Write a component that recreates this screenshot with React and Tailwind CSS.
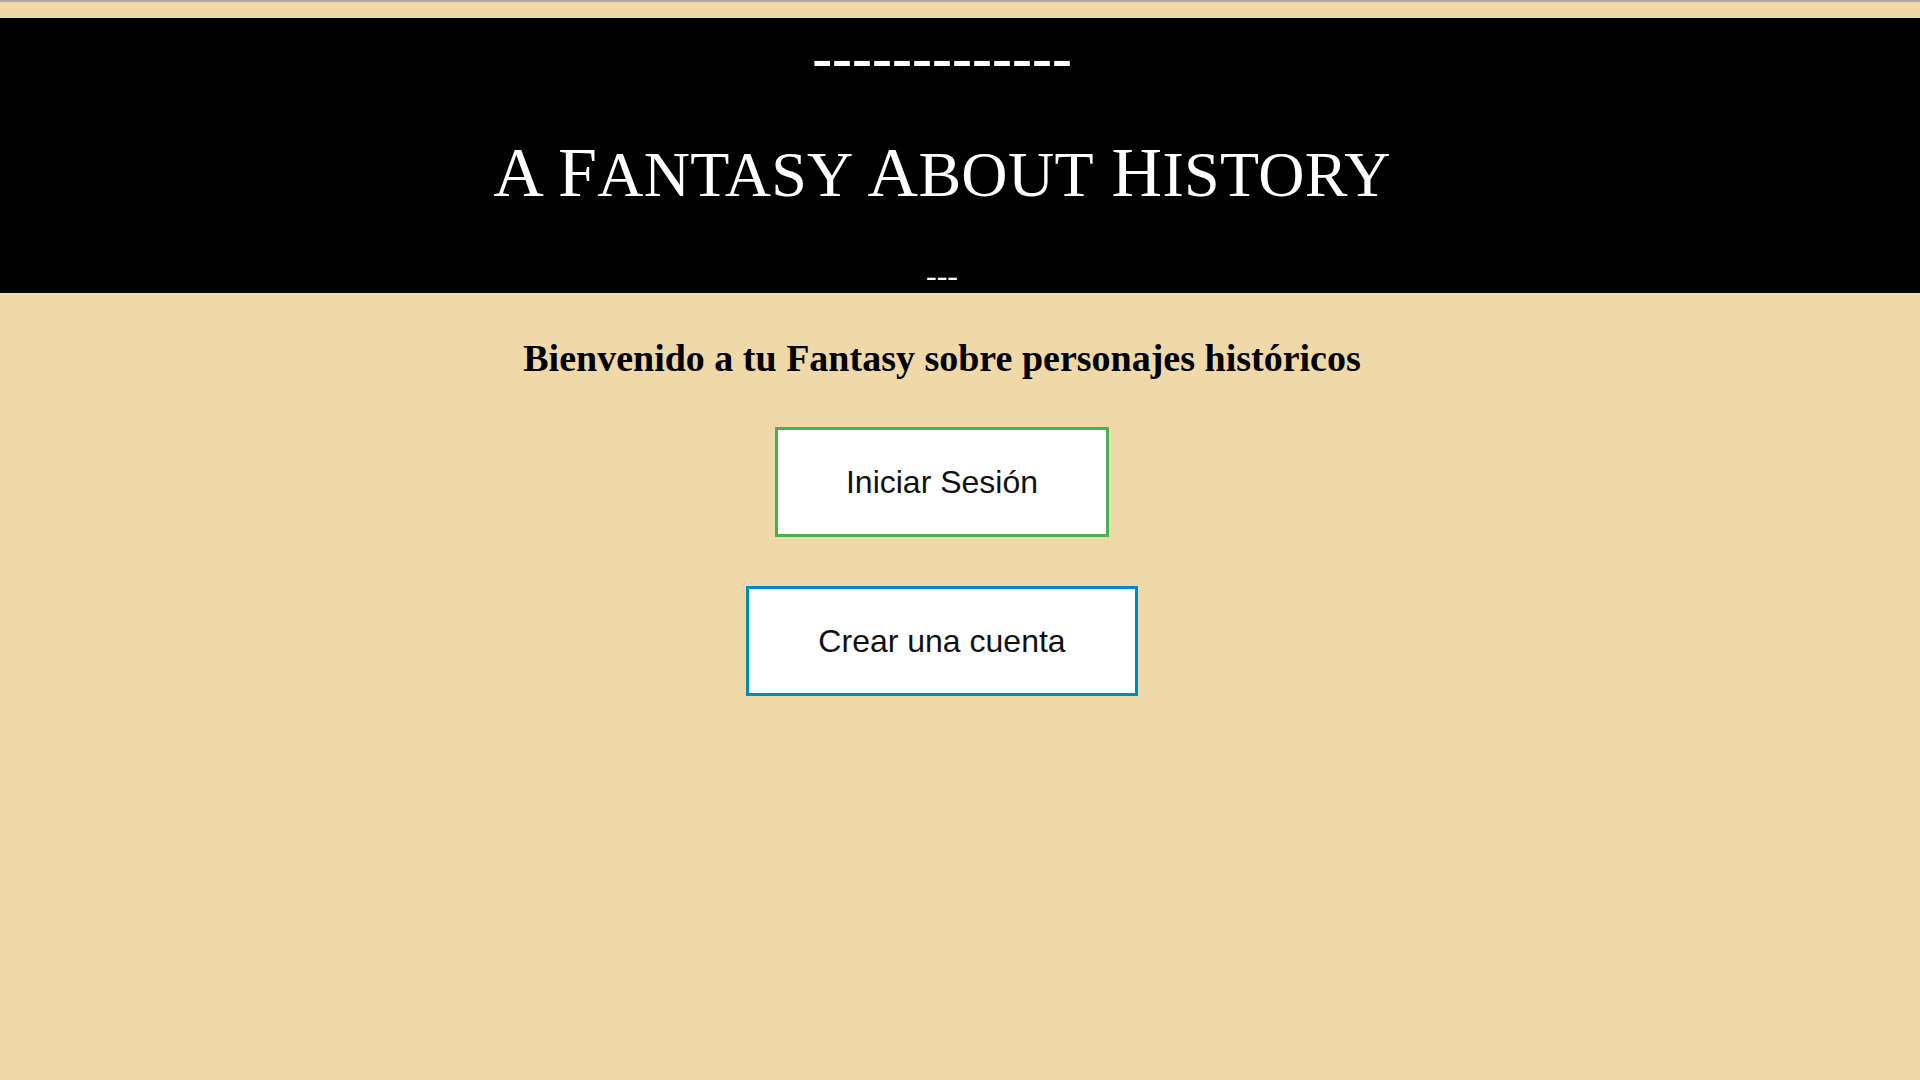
export default function App() {
  const serif = { fontFamily: '"Liberation Serif", "Times New Roman", serif' }
  const sans = { fontFamily: '"Liberation Sans", Arial, sans-serif' }

  return (
    <div className="min-h-screen w-full bg-[#f0d9a8]">
      <div className="h-[2px] bg-[#a9a9a9]" />
      <div className="h-[16px]" />

      <header className="h-[275px] bg-black text-white">
        <div className="w-[1884px] flex flex-col items-center" style={serif}>
          <p className="mt-[9px] text-[60px] leading-none font-bold">-------------</p>
          <h1 className="mt-[51px] text-[70px] leading-none tracking-[0.3px] whitespace-pre">
            A <span>F</span><span className="text-[64px]">ANTASY</span> A<span className="text-[64px]">BOUT</span> H<span className="text-[64px]">ISTORY</span>
          </h1>
          <p className="mt-[51px] text-[32px] leading-none">---</p>
        </div>
      </header>

      <main className="w-[1884px] flex flex-col items-center">
        <h2 className="mt-[46px] text-[38px] leading-none font-bold text-black" style={serif}>
          Bienvenido a tu Fantasy sobre personajes históricos
        </h2>

        <button
          className="mt-[50px] h-[110px] px-[68px] bg-white border-[3px] border-[#4caf50] text-[32px] text-[#111] flex items-center justify-center"
          style={sans}
        >
          Iniciar Sesión
        </button>

        <button
          className="mt-[49px] h-[110px] px-[69px] bg-white border-[3px] border-[#008cba] text-[32px] text-[#111] flex items-center justify-center"
          style={sans}
        >
          Crear una cuenta
        </button>
      </main>
    </div>
  )
}
